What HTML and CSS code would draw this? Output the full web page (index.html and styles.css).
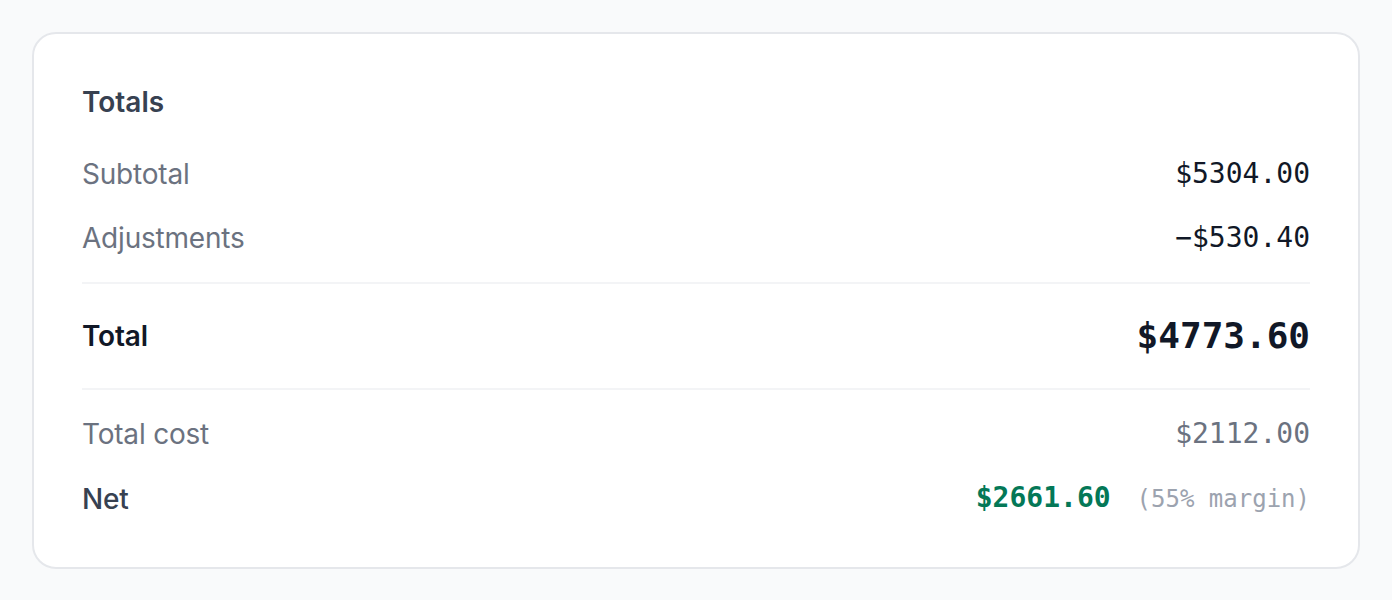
FILE: index.html
```html
<!DOCTYPE html>
<html lang="en">
<head>
<meta charset="utf-8">
<title>Totals</title>
<link rel="stylesheet" href="styles.css">
</head>
<body>
<main class="page">
  <section class="card">
    <h2 class="title">Totals</h2>
    <div class="rows">
      <div class="row">
        <span class="label">Subtotal</span>
        <span class="value">$5304.00</span>
      </div>
      <div class="row">
        <span class="label">Adjustments</span>
        <span class="value">−$530.40</span>
      </div>
      <hr class="divider">
      <div class="row row-total">
        <span class="label label-total">Total</span>
        <span class="value value-total">$4773.60</span>
      </div>
      <hr class="divider">
      <div class="row">
        <span class="label">Total cost</span>
        <span class="value value-muted">$2112.00</span>
      </div>
      <div class="row">
        <span class="label label-net">Net</span>
        <span class="net">
          <span class="value value-net">$2661.60</span>
          <span class="margin">(55% margin)</span>
        </span>
      </div>
    </div>
  </section>
</main>
</body>
</html>
```

FILE: styles.css
```css
* {
  box-sizing: border-box;
}

html, body {
  margin: 0;
  padding: 0;
  background: #f9fafb;
}

body {
  font-family: Inter, "Noto Sans", "Liberation Sans", sans-serif;
  -webkit-font-smoothing: antialiased;
}

.page {
  padding: 32px;
}

.card {
  background: #ffffff;
  border: 2px solid #e5e7eb;
  border-radius: 24px;
  padding: 48px;
}

.title {
  margin: 0 0 32px 0;
  font-size: 28px;
  line-height: 40px;
  font-weight: 600;
  color: #374151;
}

.rows {
  display: flex;
  flex-direction: column;
  gap: 24px;
}

.row {
  display: flex;
  justify-content: space-between;
  align-items: center;
  line-height: 40px;
}

.label {
  font-size: 28px;
  letter-spacing: -0.2px;
  color: #6b7280;
}

.label-total {
  font-weight: 600;
  color: #111827;
}

.label-net {
  font-weight: 500;
  color: #374151;
}

.value {
  font-family: "DejaVu Sans Mono", "Liberation Mono", monospace;
  font-size: 28px;
  color: #111827;
}

.row-total {
  line-height: 56px;
}

.value-total {
  font-size: 36px;
  font-weight: 700;
}

.value-muted {
  color: #6b7280;
}

.net {
  display: flex;
  align-items: baseline;
}

.value-net {
  font-weight: 700;
  color: #047857;
}

.margin {
  margin-left: 26px;
  font-family: "DejaVu Sans Mono", "Liberation Mono", monospace;
  font-size: 24px;
  color: #9ca3af;
}

.divider {
  margin: 0;
  border: 0;
  height: 2px;
  background: #f3f4f6;
}
```
